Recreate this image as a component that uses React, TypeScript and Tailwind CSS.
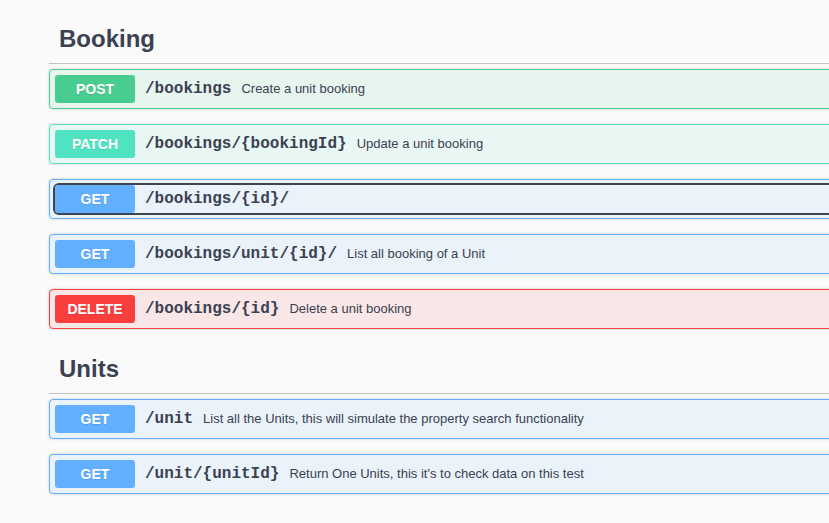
import React from "react";

type Method = "POST" | "PATCH" | "GET" | "DELETE";

interface Operation {
  method: Method;
  path: string;
  summary?: string;
  focused?: boolean;
}

interface Tag {
  name: string;
  operations: Operation[];
}

const METHOD_STYLES: Record<Method, { block: string; badge: string }> = {
  POST: { block: "border-[#49cc90] bg-[#49cc90]/10", badge: "bg-[#49cc90]" },
  PATCH: { block: "border-[#50e3c2] bg-[#50e3c2]/10", badge: "bg-[#50e3c2]" },
  GET: { block: "border-[#61affe] bg-[#61affe]/10", badge: "bg-[#61affe]" },
  DELETE: { block: "border-[#f93e3e] bg-[#f93e3e]/10", badge: "bg-[#f93e3e]" },
};

const TAGS: Tag[] = [
  {
    name: "Booking",
    operations: [
      { method: "POST", path: "/bookings", summary: "Create a unit booking" },
      { method: "PATCH", path: "/bookings/{bookingId}", summary: "Update a unit booking" },
      { method: "GET", path: "/bookings/{id}/", focused: true },
      { method: "GET", path: "/bookings/unit/{id}/", summary: "List all booking of a Unit" },
      { method: "DELETE", path: "/bookings/{id}", summary: "Delete a unit booking" },
    ],
  },
  {
    name: "Units",
    operations: [
      {
        method: "GET",
        path: "/unit",
        summary: "List all the Units, this will simulate the property search functionality",
      },
      {
        method: "GET",
        path: "/unit/{unitId}",
        summary: "Return One Units, this it's to check data on this test",
      },
    ],
  },
];

function OperationBlock({ op }: { op: Operation }) {
  const styles = METHOD_STYLES[op.method];
  return (
    <div
      className={`mb-[15px] rounded-[4px] border shadow-[0_0_3px_rgba(0,0,0,0.19)] ${styles.block}`}
    >
      <div className="flex items-center p-[5px]">
        <div
          className={`flex flex-1 items-center rounded-[4px] ${
            op.focused ? "ring-2 ring-[#3f4451]" : ""
          }`}
        >
          <span
            className={`min-w-[80px] rounded-[3px] py-[6px] text-center text-[14px] leading-[16px] font-bold text-white [text-shadow:0_1px_0_rgba(0,0,0,0.1)] ${styles.badge}`}
          >
            {op.method}
          </span>
          <span className="px-[10px] font-['Liberation_Mono',monospace] text-[16px] font-bold text-[#3b4151]">
            {op.path}
          </span>
          {op.summary && (
            <span className="text-[13px] text-[#3b4151]">{op.summary}</span>
          )}
        </div>
      </div>
    </div>
  );
}

export default function App() {
  return (
    <div className="h-[523px] w-[829px] overflow-hidden bg-[#fafafa] font-['Liberation_Sans',Arial,sans-serif]">
      <div className="w-[1000px] pt-[14px] pl-[49px]">
        {TAGS.map((tag) => (
          <section key={tag.name}>
            <h3 className="mb-[5px] border-b border-[#3b4151]/30 py-[10px] pl-[10px] text-[24px] leading-[29px] font-bold text-[#3b4151]">
              {tag.name}
            </h3>
            {tag.operations.map((op) => (
              <OperationBlock key={op.method + op.path} op={op} />
            ))}
          </section>
        ))}
      </div>
    </div>
  );
}
